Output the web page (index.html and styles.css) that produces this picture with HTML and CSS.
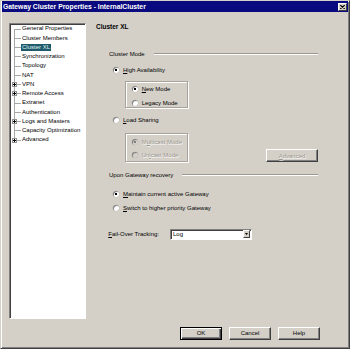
FILE: index.html
```html
<!DOCTYPE html>
<html>
<head>
<meta charset="utf-8">
<link rel="stylesheet" href="styles.css">
</head>
<body>
<div class="window">
  <div class="titlebar">
    <span class="title">Gateway Cluster Properties - InternalCluster</span>
    <span class="close"><svg width="5" height="4" viewBox="0 0 5 4"><path d="M0.3 0.2L4.7 3.8M4.7 0.2L0.3 3.8" stroke="#000" stroke-width="1.1"/></svg></span>
  </div>
  <div class="main">
    <ul class="tree">
      <li class="first"><span class="gut"></span><span class="lbl">General Properties</span></li>
      <li><span class="gut"></span><span class="lbl">Cluster Members</span></li>
      <li><span class="gut"></span><span class="lbl sel">Cluster XL</span></li>
      <li><span class="gut"></span><span class="lbl">Synchronization</span></li>
      <li><span class="gut"></span><span class="lbl">Topology</span></li>
      <li><span class="gut"></span><span class="lbl">NAT</span></li>
      <li><span class="gut"><span class="exp"></span></span><span class="lbl">VPN</span></li>
      <li><span class="gut"><span class="exp"></span></span><span class="lbl">Remote Access</span></li>
      <li><span class="gut"></span><span class="lbl">Extranet</span></li>
      <li><span class="gut"></span><span class="lbl">Authentication</span></li>
      <li><span class="gut"><span class="exp"></span></span><span class="lbl">Logs and Masters</span></li>
      <li><span class="gut"></span><span class="lbl">Capacity Optimization</span></li>
      <li class="last"><span class="gut"><span class="exp"></span></span><span class="lbl">Advanced</span></li>
    </ul>
    <div class="pane">
      <div class="heading">Cluster XL</div>
      <div class="section s-mode"><span>Cluster Mode</span><span class="rule"></span></div>
      <div class="opt o-ha"><span class="radio on"></span><span><u>H</u>igh Availability</span></div>
      <div class="subbox b-ha">
        <div class="opt sub"><span class="radio on"></span><span><u>N</u>ew Mode</span></div>
        <div class="opt sub"><span class="radio"></span><span>Legacy Mode</span></div>
      </div>
      <div class="opt o-ls"><span class="radio"></span><span><u>L</u>oad Sharing</span></div>
      <div class="lsrow">
        <div class="subbox b-ls">
          <div class="opt sub dis"><span class="radio on"></span><span>M<u>u</u>lticast Mode</span></div>
          <div class="opt sub dis"><span class="radio"></span><span>Un<u>i</u>cast Mode</span></div>
        </div>
        <span class="btn adv dis"><u>A</u>dvanced</span>
      </div>
      <div class="section s-rec"><span>Upon Gateway recovery</span><span class="rule"></span></div>
      <div class="opt o-m"><span class="radio on"></span><span><u>M</u>aintain current active Gateway</span></div>
      <div class="opt o-s"><span class="radio"></span><span><u>S</u>witch to higher priority Gateway</span></div>
      <div class="fot">
        <span class="fot-lbl"><u>F</u>ail-Over Tracking:</span>
        <span class="combo"><span class="combo-val">Log</span><span class="combo-btn"><svg width="3" height="2" viewBox="0 0 3 2"><path d="M0 0H3L1.5 2Z" fill="#000"/></svg></span></span>
      </div>
    </div>
  </div>
  <div class="buttons">
    <span class="btn def">OK</span>
    <span class="btn">Cancel</span>
    <span class="btn">Help</span>
  </div>
</div>
</body>
</html>
```
FILE: styles.css
```css
* { box-sizing: border-box; }
html, body { margin: 0; padding: 0; }
body {
  width: 350px;
  height: 349px;
  overflow: hidden;
  background: #d4d0c8;
  font-family: "Liberation Sans", Arial, sans-serif;
  font-size: 6px;
  color: #000;
}
u { text-decoration: underline; text-underline-offset: 0.5px; text-decoration-thickness: 0.5px; }

.window {
  width: 350px;
  height: 349px;
  background: #d4d0c8;
  border: 1px solid;
  border-color: #d4d0c8 #404040 #404040 #d4d0c8;
  box-shadow: inset 1px 1px 0 #fff, inset -1px -1px 0 #808080;
  display: flex;
  flex-direction: column;
}

.titlebar {
  height: 11px;
  margin: 0 1px;
  background: #0a0a80;
  display: flex;
  align-items: center;
  justify-content: space-between;
  padding: 0 1px 0 1px;
}
.title {
  color: #fff;
  font-weight: bold;
  font-size: 6.8px;
  line-height: 11px;
}
.close {
  width: 9px;
  height: 8px;
  background: #d4d0c8;
  border: 1px solid;
  border-color: #fff #404040 #404040 #fff;
  display: flex;
  align-items: center;
  justify-content: center;
}
.close svg { display: block; }

.main {
  display: flex;
  margin-top: 11px;
  padding-left: 8px;
}

.tree {
  list-style: none;
  margin: 0;
  width: 77px;
  height: 296px;
  background: #fff;
  border: 1px solid;
  border-color: #808080 #fff #fff #808080;
  box-shadow: inset 1px 1px 0 #404040;
  padding: 0.4px 0 0 0;
}
.tree li {
  height: 9.25px;
  display: flex;
  align-items: center;
}
.gut {
  width: 11px;
  align-self: stretch;
  display: flex;
  align-items: center;
  background:
    linear-gradient(#a8a8a8, #a8a8a8) no-repeat 4px 0 / 1px 100%,
    linear-gradient(#a8a8a8, #a8a8a8) no-repeat 4px 50% / 7px 1px;
}
.first .gut {
  background:
    linear-gradient(#a8a8a8, #a8a8a8) no-repeat 4px 100% / 1px 50%,
    linear-gradient(#a8a8a8, #a8a8a8) no-repeat 4px 50% / 7px 1px;
}
.last .gut {
  background:
    linear-gradient(#a8a8a8, #a8a8a8) no-repeat 4px 0 / 1px 50%,
    linear-gradient(#a8a8a8, #a8a8a8) no-repeat 4px 50% / 7px 1px;
}
.exp {
  width: 5px;
  height: 5px;
  margin-left: 2px;
  border: 1px solid #909090;
  background:
    linear-gradient(#000, #000) no-repeat 0 1px / 3px 1px,
    linear-gradient(#000, #000) no-repeat 1px 0 / 1px 3px,
    #fff;
}
.lbl {
  line-height: 7.4px;
  padding: 0 1px;
  white-space: nowrap;
}
.lbl.sel {
  background: #1e5a6c;
  color: #e0f4f4;
}

.pane {
  width: 222px;
  margin-left: 10px;
  display: flex;
  flex-direction: column;
}
.heading {
  font-weight: bold;
  font-size: 6.5px;
  line-height: 8px;
  height: 8px;
}
.section {
  display: flex;
  align-items: center;
  height: 8px;
  padding-left: 13px;
  line-height: 8px;
}
.section .rule {
  flex: 1;
  height: 2px;
  border-top: 1px solid #9c9890;
  border-bottom: 1px solid #fff;
  margin-left: 9px;
}
.s-mode { margin-top: 19px; }
.s-rec { margin-top: 9px; }

.opt {
  display: flex;
  align-items: center;
  height: 8px;
  line-height: 8px;
  gap: 4.5px;
  padding-left: 16.5px;
  white-space: nowrap;
}
.o-ha { margin-top: 7.7px; }
.o-ls { margin-top: 8.3px; }
.o-m { margin-top: 11px; }
.o-s { margin-top: 6.7px; }

.radio {
  width: 6px;
  height: 6px;
  flex: none;
  border-radius: 50%;
  background: #fff;
  box-shadow: inset 1px 1px 0 #808080, 0 0 0 0.3px #b0aca6;
}
.radio.on {
  background: radial-gradient(circle, #000 0 1.1px, #fff 1.5px);
}
.dis { color: #9a968f; text-shadow: 0.6px 0.6px 0 #fff; }
.dis .radio { background: #d4d0c8; }
.dis .radio.on { background: radial-gradient(circle, #808080 0 1.1px, #d4d0c8 1.5px); }

.subbox {
  margin-left: 29px;
  width: 63px;
  border: 1px solid #a8a49c;
  box-shadow: inset 1px 1px 0 #fff, 1px 1px 0 #fff;
  display: flex;
  flex-direction: column;
  gap: 5.4px;
  padding: 3.3px 0 0 0;
}
.b-ha { height: 27px; margin-top: 7.3px; }
.b-ls { height: 29px; padding-top: 4.3px; }
.opt.sub { padding-left: 5.7px; gap: 4px; }

.lsrow {
  display: flex;
  align-items: flex-end;
  justify-content: space-between;
  margin-top: 8.4px;
}

.btn {
  width: 42px;
  height: 13px;
  display: flex;
  align-items: center;
  justify-content: center;
  background: #d4d0c8;
  border: 1px solid;
  border-color: #fff #404040 #404040 #fff;
  box-shadow: inset -1px -1px 0 #808080;
  line-height: 8px;
}
.btn.def {
  border: 1px solid #000;
  box-shadow: inset 1px 1px 0 #fff, inset -1px -1px 0 #404040, inset -2px -2px 0 #808080;
}
.btn.adv {
  width: 52px;
  margin-bottom: -0.6px;
}

.fot {
  display: flex;
  align-items: center;
  margin-top: 16.3px;
  padding-left: 12.3px;
  height: 11px;
}
.fot-lbl { width: 61.7px; white-space: nowrap; }
.combo {
  width: 82px;
  height: 11px;
  background: #fff;
  border: 1px solid;
  border-color: #808080 #fff #fff #808080;
  box-shadow: inset 1px 1px 0 #404040;
  display: flex;
  align-items: center;
  justify-content: space-between;
  padding: 1px 1px 1px 2px;
}
.combo-val { line-height: 8px; }
.combo-btn {
  width: 7px;
  height: 8px;
  background: #d4d0c8;
  border: 1px solid;
  border-color: #fff #404040 #404040 #fff;
  display: flex;
  align-items: center;
  justify-content: center;
}
.combo-btn svg { display: block; }

.buttons {
  display: flex;
  justify-content: flex-end;
  gap: 7px;
  padding-right: 29px;
  margin-top: 7.7px;
}
```
